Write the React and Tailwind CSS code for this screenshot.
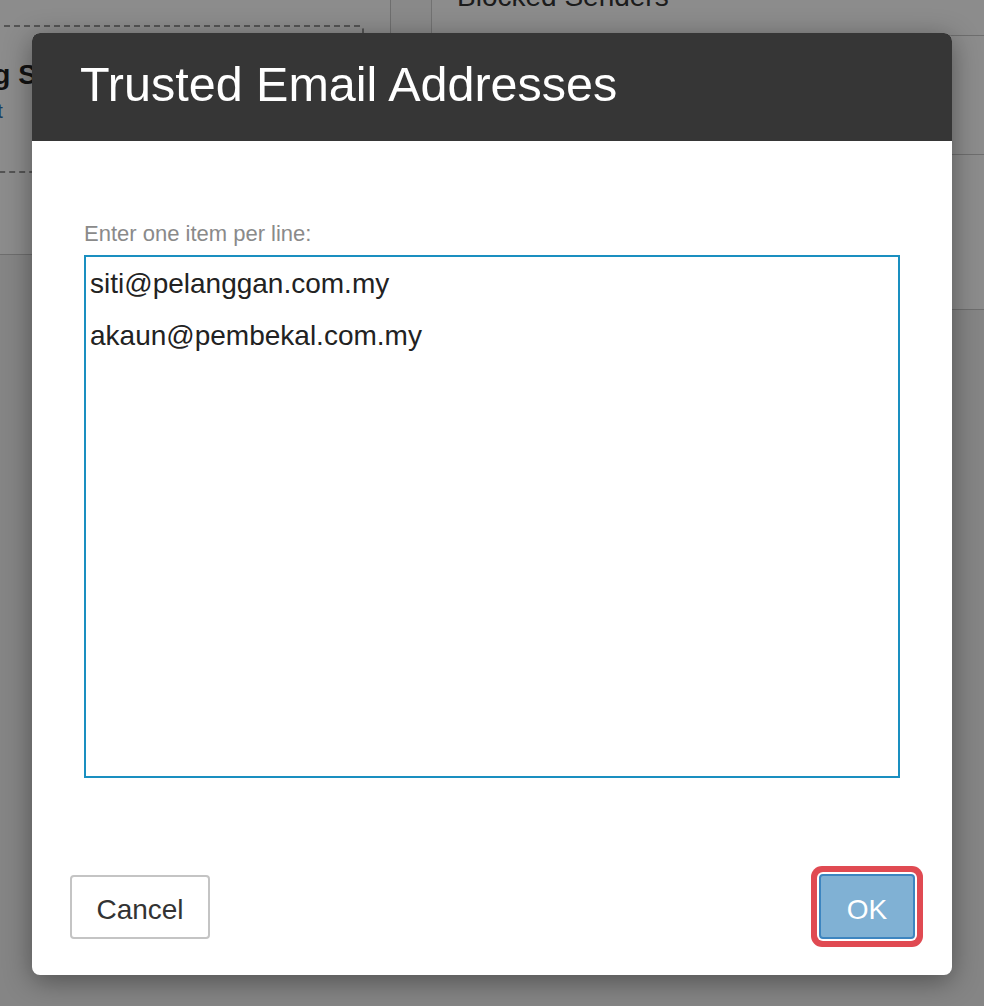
import React from "react";

export default function App() {
  return (
    <div className="relative h-[1006px] w-[984px] overflow-hidden bg-[#f2f2f2] font-['Liberation_Sans',Arial,sans-serif]">
      {/* page behind the dialog */}
      <div className="-mt-[30px] flex h-[1036px] items-start">
        <div className="flex w-[391px] flex-col">
          <div className="h-[285px] border-r border-b border-[#c8c8c8] bg-white pt-[55px]">
            <div className="-ml-[130px] mr-[26px] h-[148px] rounded-[4px] border-2 border-dashed border-[#9a9a9a] pl-[14px] pt-[30px]">
              <div className="text-[28px] font-bold leading-[36px] text-[#222]">Incoming Settings</div>
              <div className="mt-[4px] text-[20px] leading-[28px] text-[#2a6fb0]">Manage trust</div>
            </div>
          </div>
        </div>
        <div className="h-[340px] w-[41px] border-r border-[#d0d0d0] bg-[#fafafa]" />
        <div className="flex flex-1 flex-col">
          <div className="h-[66px] border-b border-[#c8c8c8] bg-white pl-[25px] pt-[9px]">
            <div className="text-[28px] leading-[36px] text-[#333]">Blocked Senders</div>
          </div>
          <div className="h-[119px] border-b border-[#c8c8c8] bg-white" />
          <div className="h-[155px] border-b border-[#c8c8c8] bg-white" />
        </div>
      </div>

      {/* overlay + dialog */}
      <div className="absolute inset-0 flex items-start justify-center bg-black/45 pt-[33px]">
        <div className="flex h-[942px] w-[920px] flex-col overflow-hidden rounded-[8px] bg-white shadow-[0_6px_28px_rgba(0,0,0,0.4)]">
          <div className="flex h-[108px] shrink-0 items-center bg-[#363636] px-[48px] pb-[5px]">
            <h1 className="text-[48.5px] font-normal leading-none text-white">Trusted Email Addresses</h1>
          </div>
          <div className="flex-1 px-[52px] pt-[80px]">
            <label className="block text-[22px] leading-[26px] text-[#8a8a8a]">Enter one item per line:</label>
            <textarea
              className="mt-[8px] block h-[523px] w-full resize-none border-2 border-[#1a8fc0] bg-white px-[4px] pt-[1px] font-['Liberation_Sans',Arial,sans-serif] text-[28px] leading-[52px] text-[#222] outline-none"
              defaultValue={"siti@pelanggan.com.my\nakaun@pembekal.com.my"}
            />
          </div>
          <div className="flex shrink-0 items-end justify-between pb-[36px] pl-[38px] pr-[37px]">
            <button className="h-[64px] w-[140px] rounded-[4px] border-2 border-[#c4c4c4] bg-white pt-[6px] text-[28px] text-[#333]">
              Cancel
            </button>
            <button className="h-[65px] w-[96px] rounded-[4px] border-2 border-[#3d85c0] bg-[#80b1d4] pt-[6px] text-[28px] text-white ring-[6px] ring-[#e04a52] ring-offset-[2px] ring-offset-white">
              OK
            </button>
          </div>
        </div>
      </div>
    </div>
  );
}
